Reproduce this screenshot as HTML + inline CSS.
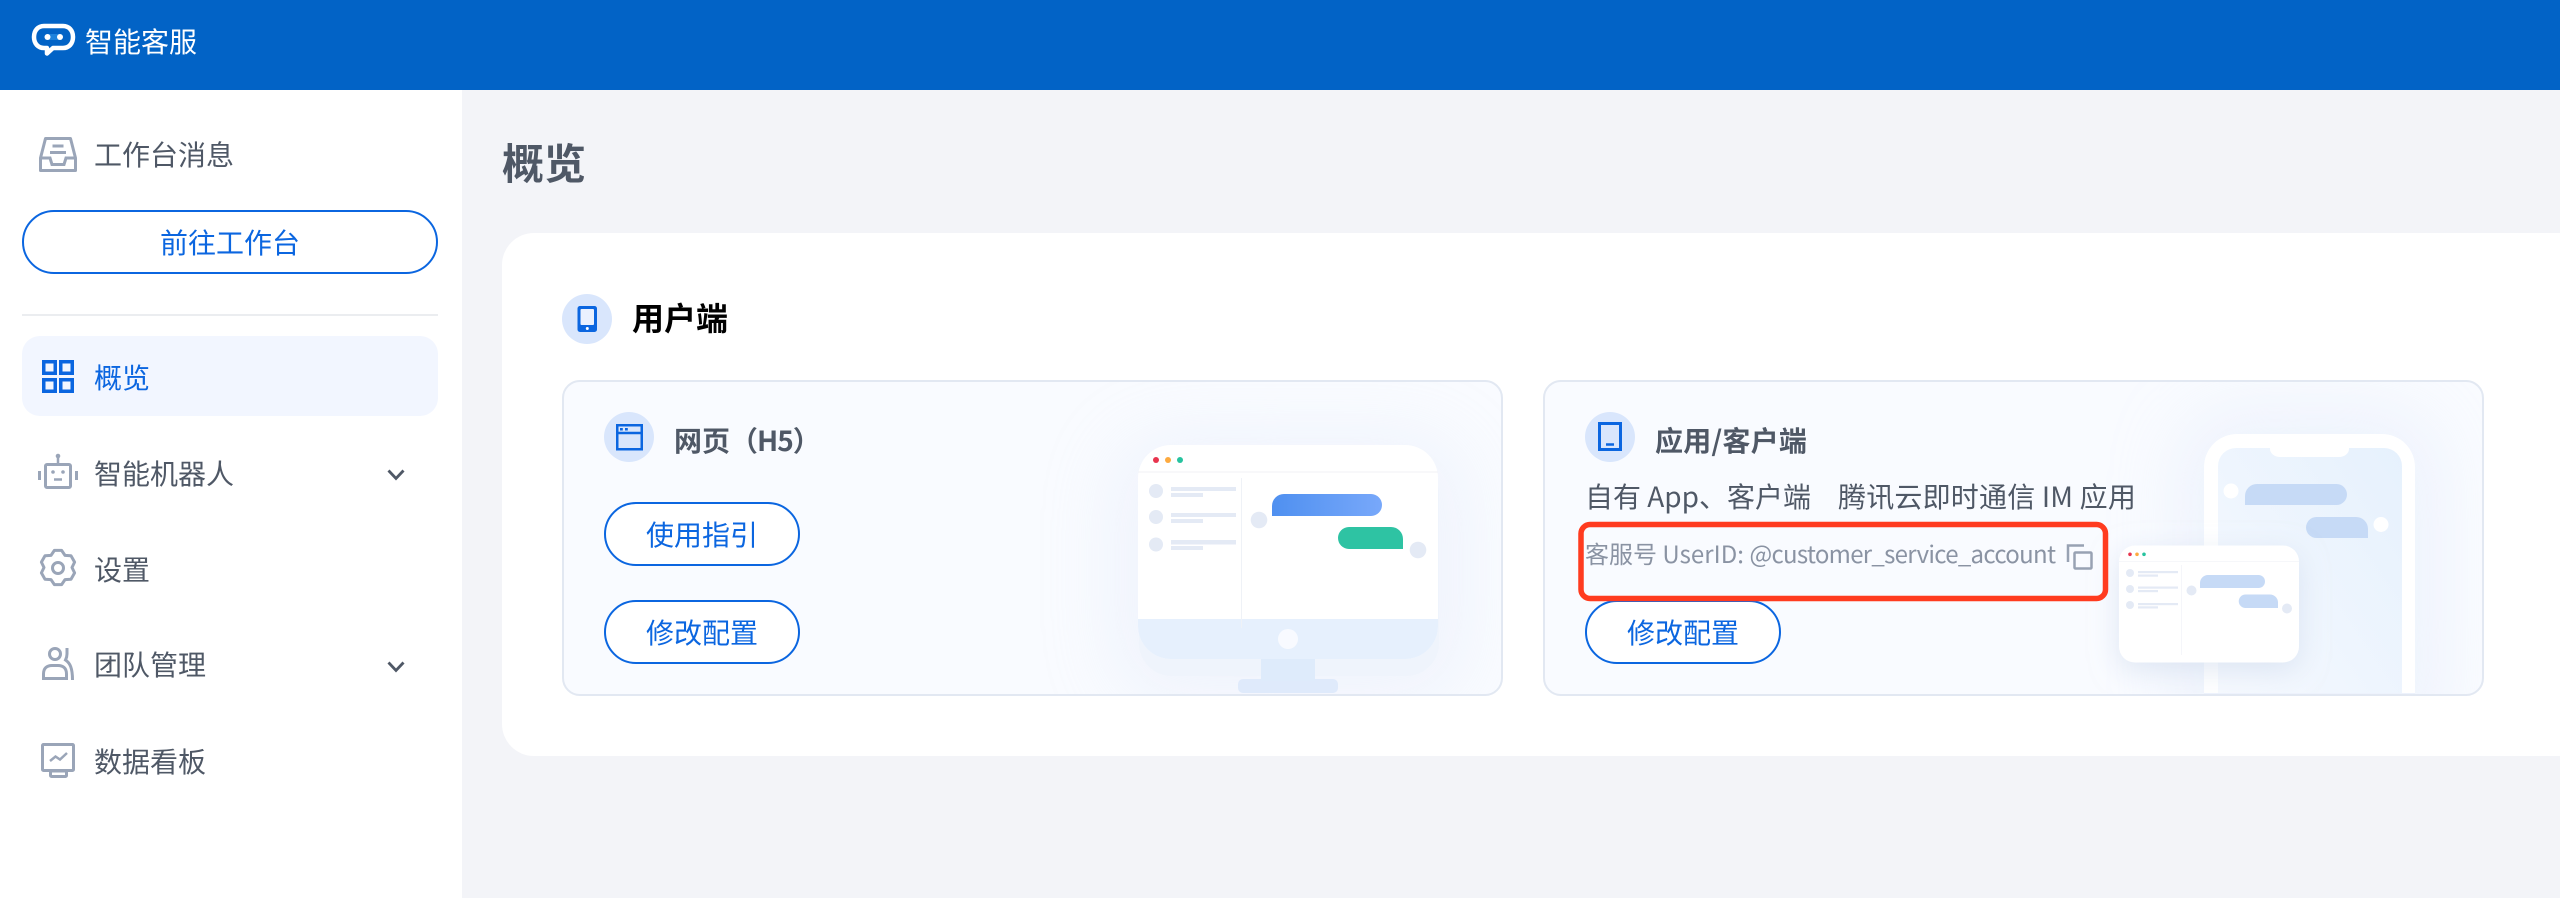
<!DOCTYPE html>
<html lang="zh-CN"><head><meta charset="utf-8"><title>智能客服</title>
<style>
html,body{margin:0;padding:0;width:2560px;height:898px;overflow:hidden;background:#f3f4f8}
body{position:relative;font-family:"Noto Sans CJK SC","Liberation Sans",sans-serif;color:#4f5866}
div,span{box-sizing:border-box}
.a{position:absolute}
.t{position:absolute;white-space:nowrap;line-height:40px;font-size:28px}
.btn{position:absolute;border:2.5px solid #0b66e0;border-radius:32px;background:#fff;color:#0b66e0;font-size:28px;display:flex;align-items:center;justify-content:center;white-space:nowrap}
svg{position:absolute;left:0;top:0}
.sub{position:absolute;top:380px;height:316px;background:#f9fbff;border:2.5px solid #e2e8f2;border-radius:18px;overflow:hidden}
.b{font-weight:700}
.c{position:absolute;width:50px;height:50px;border-radius:50%;background:#d9e6fc}
</style></head><body>
<div class="a" style="left:0;top:0;width:2560px;height:90px;background:#0263c6"></div>
<div class="a" style="left:0;top:90px;width:462px;height:808px;background:#fff"></div>
<div class="a" style="left:502px;top:233px;width:2100px;height:523px;background:#fff;border-radius:32px"></div>

<div class="t" style="left:85px;top:21px;color:#fff">智能客服</div>
<div class="t" style="left:94px;top:134px">工作台消息</div>
<div class="btn" style="left:22px;top:210px;width:416px;height:64px">前往工作台</div>
<div class="a" style="left:22px;top:314px;width:416px;height:2px;background:#ebedf0"></div>
<div class="a" style="left:22px;top:336px;width:416px;height:80px;background:#f2f6ff;border-radius:18px"></div>
<div class="t" style="left:94px;top:357px;color:#0b66e0">概览</div>
<div class="t" style="left:94px;top:453px">智能机器人</div>
<div class="t" style="left:94px;top:549px">设置</div>
<div class="t" style="left:94px;top:644px">团队管理</div>
<div class="t" style="left:94px;top:741px">数据看板</div>

<div class="t b" style="left:502px;top:137px;font-size:42px;line-height:50px">概览</div>
<div class="c" style="left:562px;top:294px"></div>
<div class="t b" style="left:632px;top:297px;font-size:32px;color:#000">用户端</div>

<div class="sub" style="left:562px;width:941px">
  <div class="a" style="left:575px;top:80px;width:300px;height:214px;border-radius:33px;background:rgba(214,226,245,.26);box-shadow:0 0 70px 25px rgba(214,226,245,.26)"></div>
</div>
<div class="sub" style="left:1543px;width:941px">
  <div class="a" style="left:659px;top:52px;width:211px;height:300px;border-radius:33px;background:rgba(214,226,245,.35);box-shadow:0 0 70px 20px rgba(214,226,245,.35)"></div>
</div>

<div class="c" style="left:604px;top:412px"></div>
<div class="t b" style="left:674px;top:420px;color:#4f5866">网页<span style="letter-spacing:-1px">（H5）</span></div>
<div class="btn" style="left:604px;top:502px;width:196px;height:64px">使用指引</div>
<div class="btn" style="left:604px;top:600px;width:196px;height:64px">修改配置</div>

<div class="c" style="left:1585px;top:412px"></div>
<div class="t b" style="left:1655px;top:420px;color:#4f5866;letter-spacing:.2px">应用/客户端</div>
<div class="t" style="left:1585px;top:476px;color:#4f5866;white-space:pre">自有 App、客户端</div>
<div class="t" style="left:1838px;top:476px;color:#4f5866;white-space:pre;letter-spacing:.2px">腾讯云即时通信 IM 应用</div>
<div class="t" style="left:1585px;top:533px;font-size:24px;color:#8a93a3">客服号 <span style="letter-spacing:.05px">UserID: </span><span style="letter-spacing:-.7px">@customer_service_account</span></div>
<div class="btn" style="left:1585px;top:600px;width:196px;height:64px">修改配置</div>

<svg width="2560" height="898" viewBox="0 0 2560 898">
<defs>
<linearGradient id="g1" x1="0" x2="1" y1="0" y2="0"><stop offset="0" stop-color="#4f90f0"/><stop offset="1" stop-color="#78a8fa"/></linearGradient>
<linearGradient id="g2" x1="1" x2="0" y1="0" y2="1"><stop offset="0" stop-color="#e6f1fd"/><stop offset="1" stop-color="#f6f9fe"/></linearGradient>
<filter id="sh" x="-30%" y="-30%" width="160%" height="170%"><feDropShadow dx="0" dy="8" stdDeviation="14" flood-color="#c9d6ea" flood-opacity=".55"/></filter>
<clipPath id="cp1"><rect x="562" y="380" width="941" height="313"/></clipPath>
<clipPath id="cp2"><rect x="1544" y="380" width="939" height="313"/></clipPath>
</defs>

<!-- logo -->
<path d="M44 26H63C69 26 73 30.500 73 37C73 43.500 69 48 63 48H53L47 53.500V48H44C38 48 34 43.500 34 37C34 30.500 38 26 44 26Z" fill="#0263c6" stroke="#fff" stroke-width="4.500" stroke-linejoin="round"/>
<rect x="46" y="34" width="16" height="6" rx="3" fill="#1d82dc"/>
<circle cx="47.500" cy="37" r="3" fill="#fff"/><circle cx="60" cy="37" r="3" fill="#fff"/>

<!-- inbox -->
<g fill="none" stroke="#9aa5b8" stroke-width="3">
<path d="M45.500 138.500H70.500L75.500 158V170.500H40.500V158Z" stroke-linejoin="round"/>
<path d="M40.500 158H50L52 164.500H64L66 158H75.500"/>
<path d="M52.500 146H63.500M50 152.500H66"/>
</g>

<!-- grid -->
<g fill="none" stroke="#0b66e0" stroke-width="3.500">
<rect x="43.750" y="361.750" width="11.500" height="11.500"/><rect x="60.750" y="361.750" width="11.500" height="11.500"/>
<rect x="43.750" y="379.750" width="11.500" height="11.500"/><rect x="60.750" y="379.750" width="11.500" height="11.500"/>
</g>

<!-- robot -->
<g fill="none" stroke="#9aa5b8">
<rect x="45.500" y="464.500" width="25" height="23" rx="1.500" stroke-width="3"/>
<path d="M58 456V464" stroke-width="2.500"/>
<path d="M39.500 471V480M76.500 471V480" stroke-width="3"/>
<path d="M54 479.500H62" stroke-width="2.500"/>
</g>
<circle cx="58" cy="456" r="2.300" fill="#9aa5b8"/><circle cx="53" cy="472" r="1.800" fill="#9aa5b8"/><circle cx="63" cy="472" r="1.800" fill="#9aa5b8"/>

<!-- gear -->
<path d="M54.400 550.400L61.600 550.400L65 555.400L71 555.800L74.600 562.100L72 567.500L74.600 572.900L71 579.200L65 579.600L61.600 584.600L54.400 584.600L51 579.600L45 579.200L41.400 572.900L44 567.500L41.400 562.100L45 555.800L51 555.400Z" fill="none" stroke="#9aa5b8" stroke-width="3" stroke-linejoin="round"/>
<circle cx="58" cy="568" r="5.500" fill="none" stroke="#9aa5b8" stroke-width="3"/>

<!-- team -->
<g fill="none" stroke="#9aa5b8" stroke-width="3">
<circle cx="55" cy="654" r="5.500"/>
<path d="M43.500 680V674C43.500 668 47 665.500 52 665.500H58C63 665.500 66.500 668 66.500 674V680M43 678.500H67"/>
<path d="M67 648V654C67 657 66 659 65.500 660C70 663 72.500 668 72.500 680"/>
</g>

<!-- chart -->
<g fill="none" stroke="#9aa5b8" stroke-width="3">
<rect x="42.500" y="744.500" width="31" height="26" rx="1"/>
<path d="M50 761L55.500 756.500L60 759.500L67 753" stroke-width="2.500"/>
<rect x="50.500" y="771" width="16" height="5.500" rx="1"/>
</g>

<!-- chevrons -->
<g fill="none" stroke="#4f5866" stroke-width="2.800">
<path d="M388.500 470.500L396 478.500L403.500 470.500"/>
<path d="M388.500 662.500L396 670.500L403.500 662.500"/>
</g>

<!-- tablet -->
<rect x="577.500" y="306" width="19.500" height="26" rx="2.500" fill="#0b66e0"/>
<rect x="580.500" y="309" width="13.500" height="16" rx="1" fill="#eaf1fe"/>
<circle cx="587.300" cy="328.500" r="1.500" fill="#fff"/>

<!-- browser -->
<g fill="none" stroke="#0b66e0" stroke-width="2.500">
<rect x="617.250" y="425.250" width="24.500" height="24"/><path d="M617 433H642"/>
</g>
<rect x="620" y="428" width="2.800" height="2.500" fill="#0b66e0"/><rect x="625" y="428" width="2.800" height="2.500" fill="#0b66e0"/>

<!-- phone -->
<g fill="none" stroke="#0b66e0" stroke-width="3">
<rect x="1599.500" y="423.500" width="21" height="26"/><path d="M1606 444.500H1614" stroke-width="2.500"/>
</g>

<!-- monitor -->
<g clip-path="url(#cp1)">
<rect x="1238" y="679" width="100" height="14" rx="5" fill="#dfeafb"/>
<rect x="1261" y="655" width="54" height="26" fill="#deebfb"/>
<path d="M1171 445H1405A33 33 0 0 1 1438 478V626A33 33 0 0 1 1405 659H1171A33 33 0 0 1 1138 626V478A33 33 0 0 1 1171 445Z" fill="#fff"/>
<path d="M1138 619H1438V626A33 33 0 0 1 1405 659H1171A33 33 0 0 1 1138 626Z" fill="#e6f0fd"/>
<circle cx="1288" cy="639" r="10" fill="#f8faff"/>
<rect x="1138" y="471.500" width="300" height="1" fill="#f0f2f6"/>
<rect x="1241" y="478" width="1" height="150" fill="#eff2f7"/>
<circle cx="1156" cy="460" r="3" fill="#e8344e"/><circle cx="1168" cy="460" r="3" fill="#fdaa3f"/><circle cx="1180" cy="460" r="3" fill="#27c39f"/>
<g fill="#e4eaf5">
<circle cx="1156" cy="491" r="7"/><circle cx="1156" cy="517" r="7"/><circle cx="1156" cy="544.500" r="7"/>
<rect x="1171" y="487" width="65" height="4"/><rect x="1171" y="493" width="32" height="4"/>
<rect x="1171" y="513" width="65" height="4"/><rect x="1171" y="519" width="32" height="4"/>
<rect x="1171" y="540" width="65" height="4.500"/><rect x="1171" y="546" width="32" height="4"/>
<circle cx="1259" cy="520" r="8.300"/><circle cx="1418" cy="550" r="8.300"/>
</g>
<path d="M1284 494H1371A11 11 0 0 1 1371 516H1272V506A12 12 0 0 1 1284 494Z" fill="url(#g1)"/>
<path d="M1349 527H1391A12 12 0 0 1 1403 539V549H1349A11 11 0 0 1 1349 527Z" fill="#2ec3a3"/>
</g>

<!-- phone illustration -->
<g clip-path="url(#cp2)">
<rect x="2204" y="434" width="211" height="300" rx="33" fill="#fff"/>
<path d="M2236 448H2384A18 18 0 0 1 2402 466V720H2218V466A18 18 0 0 1 2236 448Z" fill="url(#g2)"/>
<path d="M2270 448H2349V449A10 8 0 0 1 2339 457H2280A10 8 0 0 1 2270 449Z" fill="#fff"/>
<circle cx="2231" cy="491" r="7.500" fill="#fff"/><circle cx="2381" cy="524.500" r="7.500" fill="#fff"/>
<path d="M2257 484H2336.500A10.500 10.500 0 0 1 2336.500 505H2245V496A12 12 0 0 1 2257 484Z" fill="#c6daf6"/>
<path d="M2316.500 517H2356A12 12 0 0 1 2368 529V538H2316.500A10.500 10.500 0 0 1 2316.500 517Z" fill="#c6daf6"/>
<rect x="2119" y="545.500" width="180" height="117" rx="16" fill="#fff" filter="url(#sh)"/>
<rect x="2119" y="561" width="180" height="1" fill="#f6f7fa"/>
<rect x="2181" y="565" width="1" height="90" fill="#f5f6fa"/>
<circle cx="2130" cy="554.300" r="1.800" fill="#e8344e"/><circle cx="2137" cy="554.300" r="1.800" fill="#fdaa3f"/><circle cx="2144" cy="554.300" r="1.800" fill="#27c39f"/>
<g fill="#e4eaf5">
<circle cx="2130" cy="573" r="4"/><circle cx="2130" cy="589" r="4"/><circle cx="2130" cy="605" r="4"/>
<rect x="2138" y="571" width="40" height="2.200"/><rect x="2138" y="574.500" width="20" height="2.200"/>
<rect x="2138" y="586.500" width="40" height="2.200"/><rect x="2138" y="590" width="20" height="2.200"/>
<rect x="2138" y="603" width="40" height="2.200"/><rect x="2138" y="606.300" width="20" height="2.200"/>
<circle cx="2191.500" cy="590.500" r="5"/><circle cx="2287" cy="608.500" r="5"/>
</g>
<path d="M2208 575H2258.500A6.500 6.500 0 0 1 2258.500 588H2200V583A8 8 0 0 1 2208 575Z" fill="#c6daf6"/>
<path d="M2245.500 594.500H2270A8 8 0 0 1 2278 602.500V608H2245.500A6.750 6.750 0 0 1 2245.500 594.500Z" fill="#c6daf6"/>
</g>

<!-- copy icon -->
<g fill="none" stroke="#98a2b3" stroke-width="2.500">
<path d="M2068 562V545.500H2084"/>
<rect x="2074.500" y="552.500" width="17" height="16" rx="1"/>
</g>

<!-- red annotation -->
<rect x="1581" y="524.500" width="524.500" height="74" rx="9" fill="none" stroke="#ff3b1f" stroke-width="5.500"/>
</svg>
</body></html>
